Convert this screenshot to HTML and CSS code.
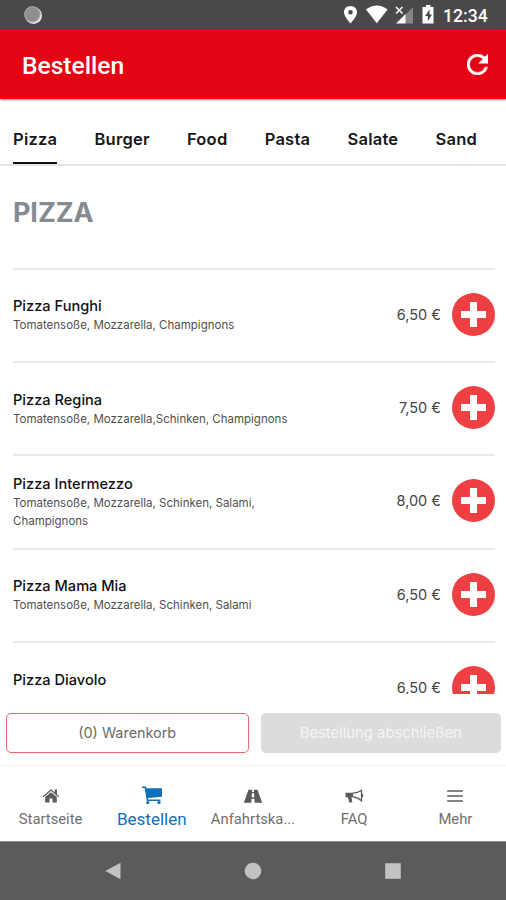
FILE: index.html
```html
<!DOCTYPE html>
<html lang="de">
<head>
<meta charset="utf-8">
<title>Bestellen</title>
<link rel="stylesheet" href="styles.css">
</head>
<body>
<svg width="0" height="0" class="defs"><defs>
<symbol id="plus" viewBox="0 0 43 43"><circle cx="21.5" cy="21.5" r="21.5" fill="#ee3f43"/><path d="M18 9h7v9h9v7h-9v9h-7v-9H9v-7h9z" fill="#fff"/></symbol>
</defs></svg>
<div class="status">
  <svg class="dot" viewBox="0 0 20 20"><circle cx="10.5" cy="10.5" r="8.5" fill="#e6e6e6"/><circle cx="9.3" cy="9.3" r="8" fill="#8f8f8f"/><circle cx="9.3" cy="9.3" r="7.6" fill="none" stroke="#aaa"/></svg>
  <svg class="sicons" viewBox="343 5 94 22">
    <path fill="#fff" fill-rule="evenodd" d="M350.5 7C346.600 7 344 9.800 344 13.300C344 17.800 350.500 24.500 350.500 24.500S357 17.800 357 13.300C357 9.800 354.400 7 350.500 7zM350.500 11a2.300 2.300 0 1 1 0 4.600a2.300 2.300 0 0 1 0-4.600z"/>
    <path fill="#fff" d="M366 10.500Q376.800 2.500 387.600 10.500L376.800 24.300z"/>
    <path fill="#858585" d="M413 8v16.500h-8v-8.500z"/><path fill="#fff" d="M396 24.500L405.500 15v9.500z"/><path d="M396 8l6.500 6.500M402.500 8L396 14.500" stroke="#fff" stroke-width="1.500"/>
    <path fill="#fff" d="M426 6h4.500v2h3v16.500h-11V8h3.500z"/><path fill="#444" d="M429.500 10.500l-4.300 6.500h2.600v5l4.200-6.600h-2.500z"/>
  </svg>
  <span class="time">12:34</span>
</div>
<header class="header">
  <h1>Bestellen</h1>
  <svg class="reload" viewBox="4 4 16 16"><path fill="#fff" stroke="#fff" stroke-width=".4" d="M17.650 6.350A7.960 7.960 0 0 0 12 4a8 8 0 1 0 7.730 10h-2.080A6 6 0 1 1 12 6c1.660 0 3.140.690 4.220 1.780L13 11h7V4z"/></svg>
</header>
<nav class="tabs">
  <span class="tab active">Pizza</span><span class="tab">Burger</span><span class="tab">Food</span><span class="tab">Pasta</span><span class="tab">Salate</span><span class="tab">Sand</span>
</nav>
<main class="menu">
  <h2>PIZZA</h2>
  <div class="row"><div class="info"><div class="name">Pizza Funghi</div><div class="desc">Tomatensoße, Mozzarella, Champignons</div></div><span class="price">6,50 €</span><svg class="add"><use href="#plus"/></svg></div>
  <div class="row"><div class="info"><div class="name">Pizza Regina</div><div class="desc">Tomatensoße, Mozzarella,Schinken, Champignons</div></div><span class="price">7,50 €</span><svg class="add"><use href="#plus"/></svg></div>
  <div class="row"><div class="info"><div class="name">Pizza Intermezzo</div><div class="desc">Tomatensoße, Mozzarella, Schinken, Salami,<br>Champignons</div></div><span class="price">8,00 €</span><svg class="add"><use href="#plus"/></svg></div>
  <div class="row"><div class="info"><div class="name">Pizza Mama Mia</div><div class="desc">Tomatensoße, Mozzarella, Schinken, Salami</div></div><span class="price">6,50 €</span><svg class="add"><use href="#plus"/></svg></div>
  <div class="row"><div class="info"><div class="name">Pizza Diavolo</div><div class="desc"></div></div><span class="price">6,50 €</span><svg class="add"><use href="#plus"/></svg></div>
</main>
<div class="actions">
  <div class="btn cart">(0) Warenkorb</div>
  <div class="btn checkout">Bestellung abschließen</div>
</div>
<nav class="bottom">
  <div class="item"><svg viewBox="0 0 20 20"><path d="M10 6.200L4.200 11v5.500h4.300v-4h3v4h4.300V11z"/><path d="M2.200 10.700L10 4.100l7.800 6.600" fill="none" stroke="currentColor" stroke-width="1.300"/><path d="M13.700 3.500h2.300v5l-2.300-2z"/></svg><span>Startseite</span></div>
  <div class="item on"><svg viewBox="0 0 20 20"><path d="M0 .5h4l.5 1.800H20v8.400L6 12.100l.3 1.500H18.500v1.500H4.800L2.600 2H0z"/><circle cx="5.800" cy="16.600" r="1.600"/><circle cx="17" cy="16.600" r="1.600"/></svg><span>Bestellen</span></div>
  <div class="item"><svg viewBox="0 0 20 20"><path fill-rule="evenodd" d="M5.500 3.700h3.700L9 6h2l-.2-2.300h3.700l4.700 13h-7.500l-.3-3.900H8.600l-.3 3.900H.800zM9 7.300l-.3 3.900h2.600L11 7.300z"/></svg><span>Anfahrtska...</span></div>
  <div class="item"><svg viewBox="0 0 20 20"><path d="M1.500 6.700h7.500v4.600H7.500l.8 4.900-2.800.6-1.700-5.500H1.500z"/><path d="M9 7.200q5-.5 8.500-3v10.500Q14 11.300 9 10.800" fill="none" stroke="currentColor" stroke-width="1.300"/><path d="M17.300 7.500a2 2 0 0 1 0 4z"/></svg><span>FAQ</span></div>
  <div class="item"><svg viewBox="0 0 20 20"><path d="M2.200 4.300h15.600v1.400H2.200zM2.200 9.300h15.600v1.400H2.200zM2.200 14.300h15.600v1.400H2.200z"/></svg><span>Mehr</span></div>
</nav>
<div class="system">
  <svg viewBox="0 0 18 18"><path d="M16.500 .7v16.600L1.300 9z"/></svg>
  <svg viewBox="0 0 18 18"><circle cx="9" cy="9" r="8.300"/></svg>
  <svg viewBox="0 0 18 18"><path d="M1.200 1.200h15.600v15.600H1.200z"/></svg>
</div>
</body>
</html>
```
FILE: styles.css
```css
* { box-sizing: border-box; margin: 0; }
body { width: 506px; height: 900px; overflow: hidden; display: flex; flex-direction: column; background: #fff; font-family: Inter, sans-serif; color: #171717; }
.defs { position: absolute; }
.status { height: 30px; flex: none; background: #494949; display: flex; align-items: center; padding: 0 18px 0 23px; font-family: Roboto, sans-serif; color: #fff; }
.dot { width: 20px; height: 20px; margin-right: auto; }
.sicons { width: 94px; height: 22px; }
.time { font-size: 17.6px; font-weight: 500; line-height: 30px; width: 45px; margin-left: 6px; white-space: nowrap; padding-top: 2px; }
.header { position: relative; height: 68.500px; flex: none; background: #e50413; display: flex; align-items: center; justify-content: space-between; padding: 0 18px 0 22px; box-shadow: 0 1px 2px #0007; }
h1 { font: 500 24.6px/30px Roboto, sans-serif; color: #fff; padding-top: 4px; }
.reload { width: 21px; height: 21px; }
.tabs { height: 67px; flex: none; border-bottom: 2px solid #e4e4e4; padding: 0 13px; display: flex; gap: 37.200px; overflow: hidden; }
.tab { font-size: 16.5px; font-weight: 600; line-height: 80px; height: 65px; white-space: nowrap; letter-spacing: .24px; }
.active { border-bottom: 2px solid #111; }
.menu { height: 528.500px; flex: none; overflow: hidden; padding: 0 11px 0 13px; }
h2 { font-size: 26.8px; line-height: 32px; font-weight: 700; color: #848b91; padding: 30px 0 0; height: 102px; letter-spacing: 0; }
.row { height: 93.400px; border-top: 2px solid #e9e9e9; display: flex; align-items: center; padding-bottom: 2px; }
.info { flex: 1; padding-top: 2px; }
.name { font-size: 14.6px; line-height: 20px; font-weight: 500; color: #111; }
.desc { font-size: 11.5px; line-height: 18px; min-height: 18px; color: #505050; white-space: nowrap; }
.price { font-size: 14.5px; color: #444; margin-right: 11px; }
.add { width: 43px; height: 43px; }
.actions { height: 72px; flex: none; padding: 18.500px 5px 0 6px; display: flex; gap: 12px; border-bottom: 1px solid #eef0f2; }
.btn { flex: 1; height: 40px; border-radius: 5px; text-align: center; font-size: 14.8px; line-height: 40px; }
.cart { border: 1.500px solid #e8686c; color: #6b6b6b; line-height: 38px; font-size: 14.4px; }
.checkout { background: #dcdcdc; color: #f5f5f5; }
.bottom { height: 75px; flex: none; display: grid; grid-template-columns: repeat(5, 1fr); font-family: Roboto, sans-serif; font-size: 14.8px; color: #707070; }
.item { display: flex; flex-direction: column; align-items: center; padding-top: 20px; white-space: nowrap; }
.item svg { width: 20px; height: 20px; fill: currentColor; color: #5b5b5b; }
.item span { line-height: 27px; }
.item.on { color: #1170b8; font-size: 17px; }
.on svg { color: #1170b8; }
.system { flex: 1; background: #5b5b5b; border-top: 1px solid #8d8d8d; display: flex; justify-content: center; align-items: center; gap: 122px; }
.system svg { width: 18px; height: 18px; fill: #c2c2c2; }
```
